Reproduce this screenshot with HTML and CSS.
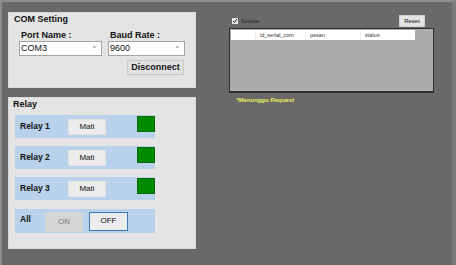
FILE: index.html
```html
<!DOCTYPE html>
<html lang="en">
<head>
    <meta charset="UTF-8">
    <title>Relay Control</title>
    <link rel="stylesheet" href="styles.css">
</head>
<body>
<div class="window">
    <div class="left">
        <div class="panel com">
            <div class="panel-title">COM Setting</div>
            <div class="fields">
                <div class="field-label">Port Name :</div>
                <div class="field-label">Baud Rate :</div>
                <div class="combo port">COM3<span class="arrow">&#8964;</span></div>
                <div class="combo baud">9600<span class="arrow">&#8964;</span></div>
            </div>
            <div class="com-actions">
                <div class="btn disconnect">Disconnect</div>
            </div>
        </div>

        <div class="panel relay">
            <div class="panel-title">Relay</div>
            <div class="rows">
                <div class="relay-row">
                    <div class="relay-name">Relay 1</div>
                    <div class="btn mati">Mati</div>
                    <div class="lamp"></div>
                </div>
                <div class="relay-row">
                    <div class="relay-name">Relay 2</div>
                    <div class="btn mati">Mati</div>
                    <div class="lamp"></div>
                </div>
                <div class="relay-row">
                    <div class="relay-name">Relay 3</div>
                    <div class="btn mati">Mati</div>
                    <div class="lamp"></div>
                </div>
                <div class="relay-row all">
                    <div class="relay-name all-name">All</div>
                    <div class="btn on">ON</div>
                    <div class="btn off">OFF</div>
                </div>
            </div>
        </div>
    </div>

    <div class="right">
        <div class="topbar">
            <span class="check">
                <svg width="6" height="6" viewBox="0 0 6 6"><path d="M1 3 L2.5 4.5 L5 1" fill="none" stroke="#222" stroke-width="1"/></svg>
            </span>
            <span class="check-label">Service</span>
            <div class="btn reset">Reset</div>
        </div>
        <div class="grid">
            <div class="grid-head">
                <div class="col col-row"></div>
                <div class="col col-id">id_serial_com</div>
                <div class="col col-pesan">pesan</div>
                <div class="col col-status">status</div>
            </div>
        </div>
        <div class="waiting">*Menunggu Request</div>
    </div>
</div>
</body>
</html>
```

FILE: styles.css
```css
* {
    box-sizing: border-box;
}

body {
    margin: 0;
    width: 456px;
    height: 265px;
    overflow: hidden;
    background: #696969;
    font-family: "Liberation Sans", Arial, sans-serif;
    color: #111;
}

.window {
    display: flex;
    height: 265px;
    padding: 10px 0 0 6px;
    border-top: 2px solid #8d8d8d;
    border-left: 2px solid #8d8d8d;
    border-right: 4px solid #7c7c7c;
}

.left {
    display: flex;
    flex-direction: column;
    gap: 9px;
    width: 188px;
}

.panel {
    background: #e4e4e4;
    border: 1px solid #d8d8d8;
}

.panel-title {
    font-size: 9px;
    font-weight: bold;
    line-height: 11px;
}

/* COM setting */

.com {
    height: 76px;
    padding: 1px 0 0 5px;
}

.fields {
    display: grid;
    grid-template-columns: 83px 77px;
    column-gap: 6px;
    margin: 5px 0 0 5px;
}

.field-label {
    font-size: 9px;
    font-weight: bold;
    line-height: 11px;
    padding-left: 2px;
}

.combo {
    position: relative;
    height: 15px;
    background: #fff;
    border: 1px solid #a3a3a3;
    font-size: 9px;
    line-height: 13px;
    padding-left: 1px;
}

.combo .arrow {
    position: absolute;
    right: 3px;
    top: -3px;
    font-size: 8px;
    color: #888;
}

.com-actions {
    display: flex;
    justify-content: flex-end;
    width: 170px;
    margin-top: 4px;
}

.btn {
    text-align: center;
    background: #e9e9e9;
    border: 1px solid #d6d6d6;
}

.disconnect {
    width: 57px;
    height: 15px;
    font-size: 9px;
    font-weight: bold;
    line-height: 13px;
    background: #e1e1e1;
    border-color: #c8c8c8;
}

/* Relay */

.relay {
    height: 152px;
    padding: 1px 0 0 4px;
}

.rows {
    display: flex;
    flex-direction: column;
    gap: 8px;
    margin: 5px 0 0 2px;
}

.relay-row {
    display: flex;
    align-items: flex-start;
    width: 140px;
    height: 23px;
    background: #b9d1ea;
}

.relay-name {
    width: 53px;
    padding-left: 5px;
    font-size: 8.5px;
    font-weight: bold;
    line-height: 23px;
}

.mati {
    width: 38px;
    height: 16px;
    margin-top: 4px;
    font-size: 8px;
    line-height: 14px;
    background: #ececec;
    border-color: #e2e2e2;
}

.lamp {
    width: 18px;
    height: 16px;
    margin: 1px 0 0 31px;
    background: #008a00;
    border: 1px solid #0a6a0a;
}

.relay-row.all {
    height: 24px;
    margin-top: 1px;
}

.all-name {
    width: 30px;
    line-height: 20px;
}

.on {
    width: 38px;
    height: 20px;
    margin-top: 3px;
    font-size: 8px;
    line-height: 18px;
    color: #7a7a7a;
    background: #d6d6d6;
    border-color: #d6d6d6;
}

.off {
    width: 39px;
    height: 19px;
    margin: 3px 0 0 6px;
    font-size: 8px;
    line-height: 16px;
    background: #ececec;
    border: 1.5px solid #3f78b4;
}

/* Right side */

.right {
    display: flex;
    flex-direction: column;
    width: 205px;
    margin-left: 33px;
}

.topbar {
    display: flex;
    align-items: center;
    height: 16px;
    padding-top: 2px;
}

.check {
    display: flex;
    align-items: center;
    justify-content: center;
    width: 6px;
    height: 6px;
    margin-left: 3px;
    background: #e8e8e8;
}

.check-label {
    margin-left: 3px;
    font-size: 5.5px;
    color: #222;
}

.reset {
    width: 26px;
    height: 12px;
    margin: 0 9px 0 auto;
    font-size: 6px;
    line-height: 10px;
    background: #e4e4e4;
    border-color: #cfcfcf;
}

.grid {
    height: 65px;
    background: #ababab;
    border: 1px solid #2e2e2e;
    border-bottom-width: 2px;
    padding: 1px;
}

.grid-head {
    display: flex;
    width: 184px;
    height: 10px;
    background: #fff;
    font-size: 5.5px;
    line-height: 10px;
    color: #333;
}

.col {
    padding-left: 4px;
    border-right: 1px solid #eee;
}

.col-row {
    width: 25px;
}

.col-id {
    width: 50px;
}

.col-pesan {
    width: 55px;
}

.col-status {
    flex: 1;
    border-right: none;
}

.waiting {
    margin: 4px 0 0 7px;
    font-size: 6px;
    font-style: italic;
    font-weight: bold;
    color: #e6f25c;
}
```
